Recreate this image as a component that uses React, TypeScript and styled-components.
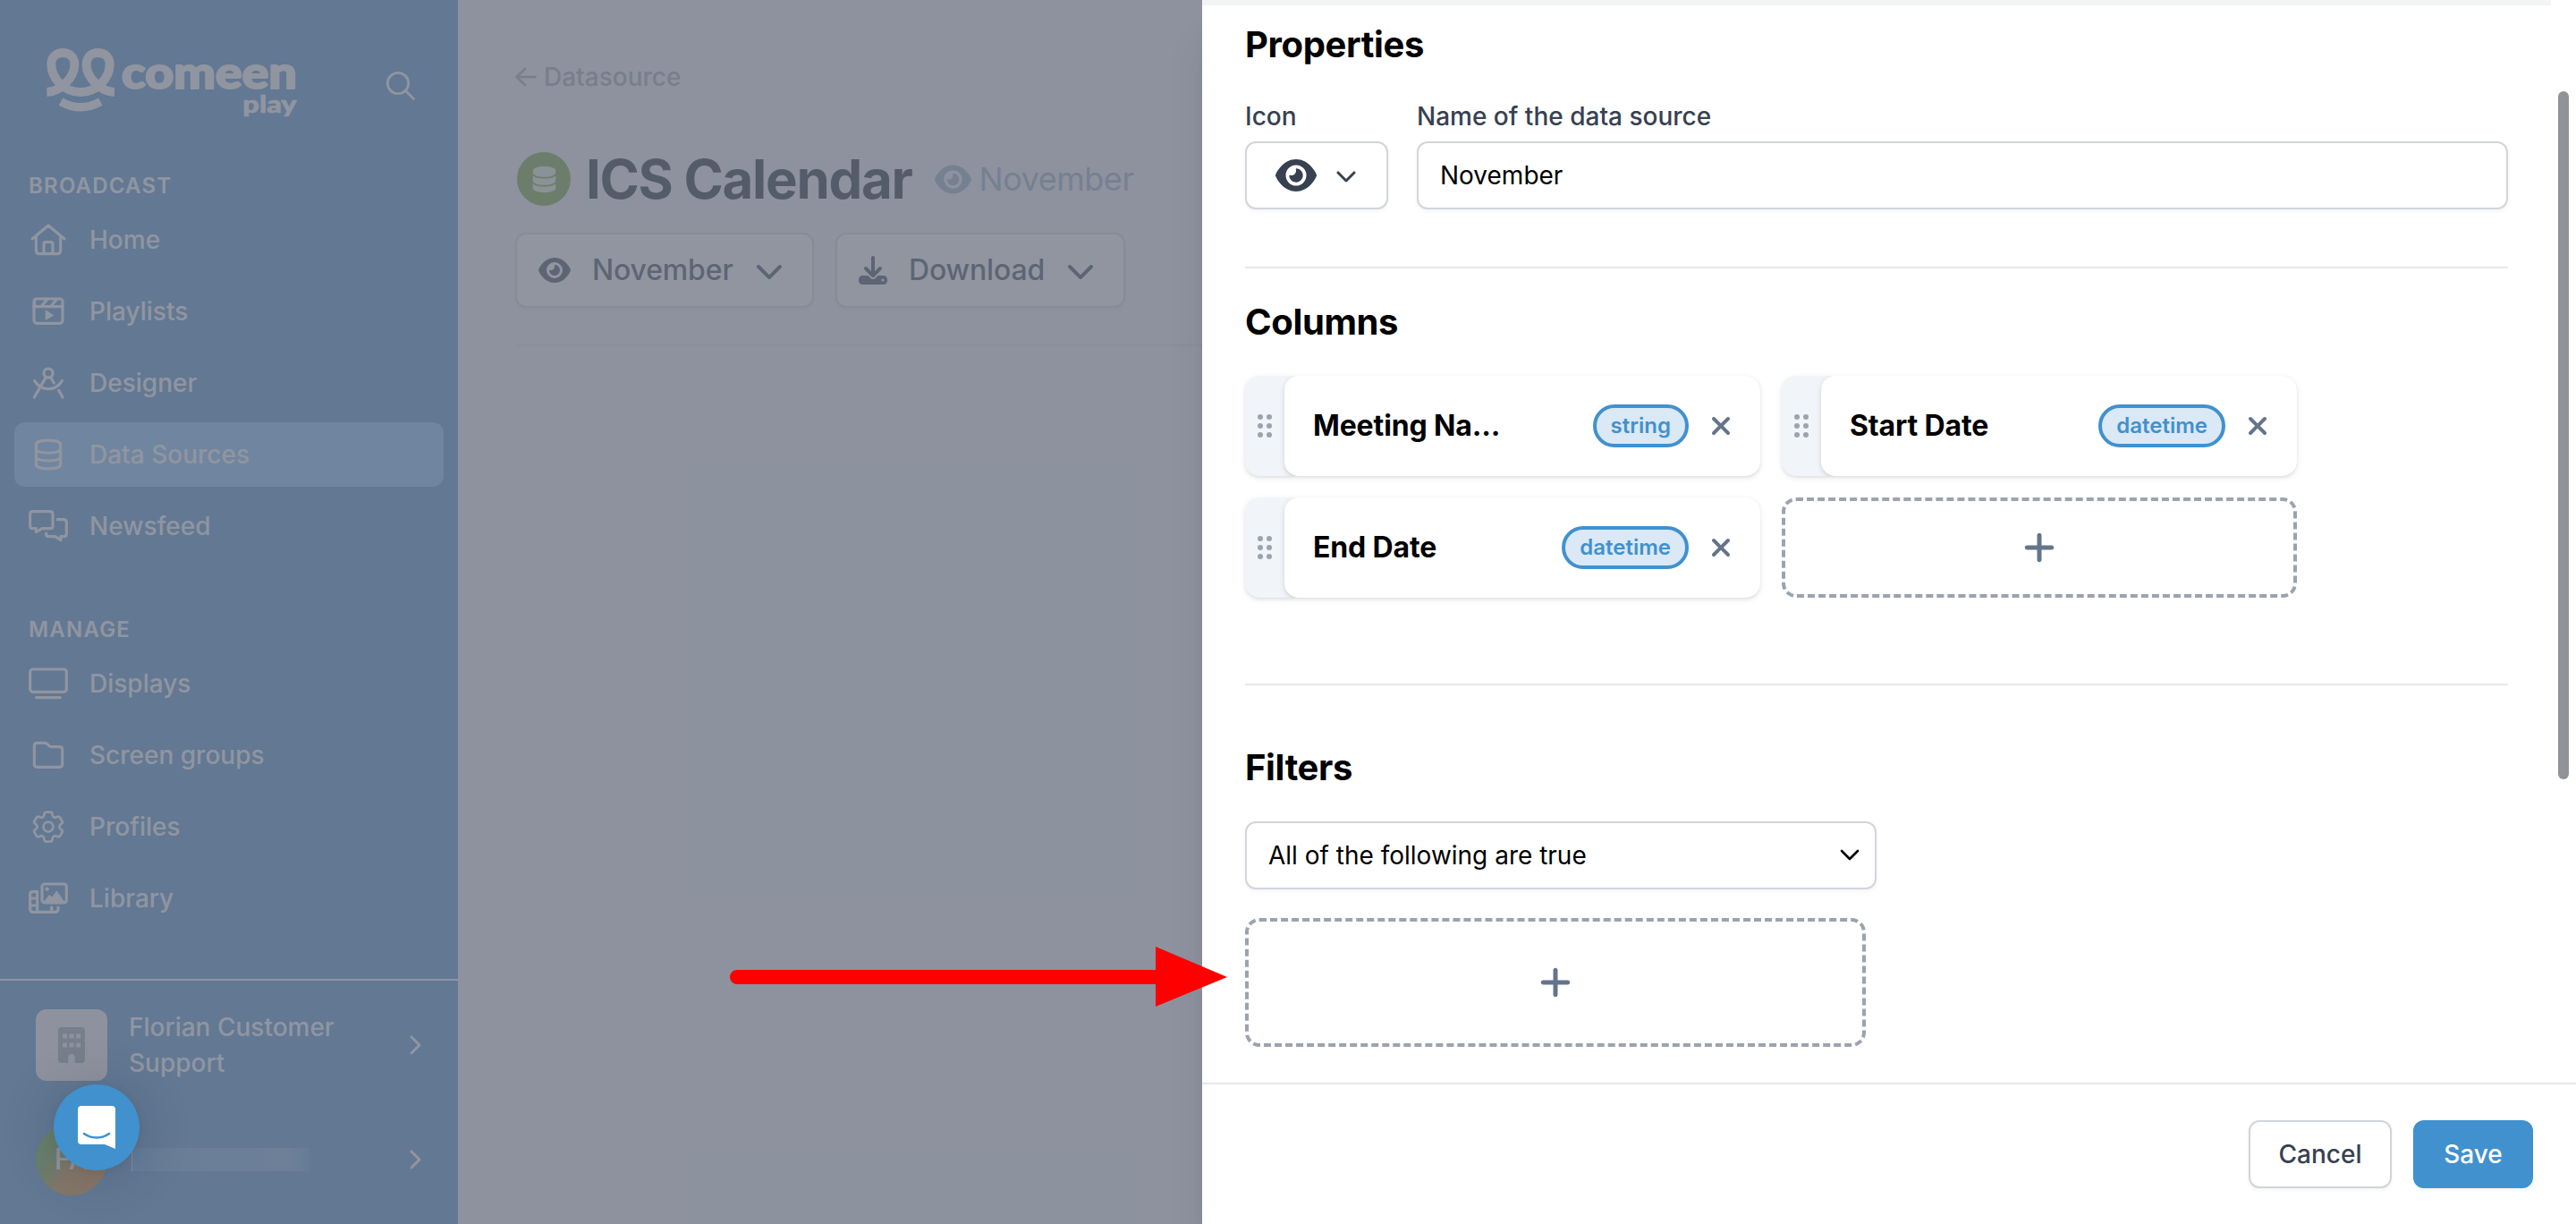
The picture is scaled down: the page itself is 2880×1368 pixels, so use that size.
import React from "react";
import styled, { createGlobalStyle } from "styled-components";
import { FaEye, FaDownload, FaChevronDown, FaChevronRight, FaBuilding, FaXmark, FaPlus, FaDatabase } from "react-icons/fa6";
import { HiOutlineCog6Tooth } from "react-icons/hi2";

const Global = createGlobalStyle`
  *, *::before, *::after { box-sizing: border-box; }
  body { margin: 0; background: #f3f4f6; overflow: hidden; }
  body, button, input { font-family: Inter, "Liberation Sans", sans-serif; }
  svg { display: block; flex: none; }
`;

const Page = styled.div`
  position: relative;
  display: flex;
  width: 2880px;
  height: 1368px;
  overflow: hidden;
  background: #f3f4f6;
`;

/* ---------- sidebar ---------- */

const Sidebar = styled.aside`
  display: flex;
  flex-direction: column;
  flex: none;
  width: 512px;
  background: #498acb;
  color: #fff;
`;

const SidebarHeader = styled.header`
  display: flex;
  justify-content: space-between;
  align-items: flex-start;
  flex: none;
  height: 192px;
  padding: 52px 46px 0 50px;
`;

const SearchButton = styled.span`
  display: flex;
  margin-top: 26px;
`;

const NavSections = styled.div`
  display: flex;
  flex-direction: column;
  gap: 64px;
  padding: 0 16px;
`;

const NavSection = styled.nav`
  display: flex;
  flex-direction: column;
  gap: 8px;
`;

const NavHeading = styled.h3`
  margin: 0;
  padding-left: 16px;
  font-size: 24px;
  line-height: 32px;
  font-weight: 600;
  letter-spacing: 0.05em;
`;

const NavItem = styled.a<{ $active?: boolean }>`
  display: flex;
  align-items: center;
  gap: 24px;
  height: 72px;
  padding: 0 16px;
  border-radius: 12px;
  background: ${(p) => (p.$active ? "#7fc0fc" : "transparent")};
  font-size: 28px;
  font-weight: 500;
`;

const IconSlot = styled.span`
  display: flex;
  align-items: center;
  justify-content: center;
  width: 44px;
  height: 44px;
`;

const SidebarFooter = styled.footer`
  display: flex;
  flex-direction: column;
  flex: none;
  gap: 48px;
  margin-top: auto;
  height: 274px;
  padding: 32px 40px;
  border-top: 2px solid #fff;
`;

const AccountRow = styled.div`
  display: flex;
  align-items: center;
  height: 80px;
  gap: 24px;
  font-size: 28px;
  line-height: 40px;
  font-weight: 500;
`;

const AccountLogo = styled.div`
  display: flex;
  align-items: center;
  justify-content: center;
  flex: none;
  width: 80px;
  height: 80px;
  border-radius: 12px;
  background: #f3f4f6;
  color: #9ca3af;
`;

const Avatar = styled.div`
  display: flex;
  align-items: center;
  justify-content: center;
  flex: none;
  width: 80px;
  height: 80px;
  border-radius: 50%;
  background: linear-gradient(125deg, #56aa34 15%, #72a034 34%, #cf862c 56%, #e48220 100%);
  font-size: 32px;
`;

const AccountName = styled.div`
  flex: 1;
  min-width: 0;
`;

const MaskedName = styled.div`
  width: 199px;
  height: 26px;
  margin-left: 3px;
  border-left: 1px solid #cfe0f2;
  background: linear-gradient(90deg, #4a9eec, #62a0da 14%, #6fa7de 50%, #76abde 88%, #599ada);
`;

const Disclosure = styled.span`
  display: flex;
  justify-content: center;
  width: 18px;
`;

/* ---------- main column ---------- */

const Main = styled.main`
  flex: 1;
  padding: 66px 64px 0;
`;

const Breadcrumb = styled.a`
  display: flex;
  align-items: center;
  gap: 8px;
  height: 40px;
  color: #9ca3af;
  font-size: 28px;
  font-weight: 500;
`;

const TitleRow = styled.div`
  display: flex;
  align-items: center;
  height: 60px;
  margin: 64px 0 30px;
  padding-left: 2px;
`;

const SourceBadge = styled.span`
  display: flex;
  align-items: center;
  justify-content: center;
  width: 60px;
  height: 60px;
  border-radius: 50%;
  background: #6fa42c;
  color: #e8f2dc;
`;

const Title = styled.h1`
  margin: 0 25px 0 17px;
  color: #111827;
  font-size: 60px;
  font-weight: 700;
  letter-spacing: -0.022em;
`;

const Subtitle = styled.span`
  display: flex;
  align-items: center;
  gap: 9px;
  color: #94aac2;
  font-size: 36px;
  letter-spacing: -0.013em;
`;

const Actions = styled.div`
  display: flex;
  gap: 24px;
  padding-bottom: 40px;
  border-bottom: 4px solid #e5e7eb;
`;

const ActionButton = styled.button<{ $width: number }>`
  display: flex;
  align-items: center;
  gap: 24px;
  width: ${(p) => p.$width}px;
  height: 84px;
  padding: 0 24px 1px;
  border: 2px solid #d1d5db;
  border-radius: 12px;
  background: #fff;
  box-shadow: 0 2px 4px rgba(0, 0, 0, 0.05);
  color: #374151;
  font-size: 32px;
  font-weight: 500;
  letter-spacing: -0.005em;
`;

/* ---------- drawer ---------- */

const Backdrop = styled.div`
  position: absolute;
  inset: 0;
  background: rgba(107, 114, 128, 0.75);
`;

const Drawer = styled.section`
  position: absolute;
  top: 0;
  right: 0;
  bottom: 0;
  display: flex;
  flex-direction: column;
  width: 1536px;
  background: #fff;
  box-shadow: 0 40px 50px -10px rgba(0, 0, 0, 0.1), 0 16px 20px -12px rgba(0, 0, 0, 0.1);
`;

const DrawerScroll = styled.div`
  display: flex;
  height: 1210px;
`;

const DrawerBody = styled.div`
  flex: 1;
  border-top: 6px solid #f3f4f6;
  padding: 16px 48px 0;
`;

const ScrollTrack = styled.div`
  width: 28px;
  padding: 102px 8px 0;
`;

const ScrollThumb = styled.div`
  width: 12px;
  height: 769px;
  border-radius: 6px;
  background: #909398;
`;

const Heading = styled.h2`
  margin: 0 0 32px;
  color: #000;
  font-size: 40px;
  line-height: 56px;
  font-weight: 700;
  letter-spacing: -0.009em;
`;

const FieldRow = styled.div`
  display: flex;
  gap: 32px;
`;

const Field = styled.div<{ $width?: number }>`
  display: flex;
  flex-direction: column;
  gap: 8px;
  ${(p) => (p.$width ? `width: ${p.$width}px;` : "flex: 1;")}
`;

const Label = styled.label`
  color: #374151;
  font-size: 28px;
  line-height: 40px;
  font-weight: 500;
`;

const Control = styled.div<{ $width?: number; $center?: boolean }>`
  display: flex;
  align-items: center;
  justify-content: ${(p) => (p.$center ? "center" : "space-between")};
  gap: 21px;
  width: ${(p) => (p.$width ? `${p.$width}px` : "100%")};
  height: 76px;
  padding: 0 17px 0 ${(p) => (p.$center ? 16 : 24)}px;
  border: 2px solid #d1d5db;
  border-radius: 12px;
  background: #fff;
  box-shadow: 0 2px 4px rgba(0, 0, 0, 0.05);
  color: ${(p) => (p.$center ? "#374151" : "#000")};
  font-size: 28px;
`;

const Divider = styled.hr<{ $before: number; $after: number }>`
  height: 2px;
  margin: ${(p) => p.$before}px 0 ${(p) => p.$after}px;
  border: 0;
  background: #e5e7eb;
`;

const ColumnGrid = styled.div`
  display: grid;
  grid-template-columns: 576px 576px;
  grid-auto-rows: 112px;
  gap: 24px;
`;

const ColumnCard = styled.article`
  display: flex;
  overflow: hidden;
  border-radius: 16px;
  background: #f1f5f9;
  box-shadow: 0 2px 6px rgba(0, 0, 0, 0.1), 0 2px 4px -2px rgba(0, 0, 0, 0.1);
`;

const Grip = styled.div`
  display: grid;
  grid-template-columns: 6px 6px;
  gap: 4px;
  place-content: center;
  width: 44px;
`;

const GripDot = styled.i`
  width: 6px;
  height: 6px;
  border-radius: 50%;
  background: #9ca3af;
`;

const ColumnBody = styled.div`
  display: flex;
  align-items: center;
  flex: 1;
  min-width: 0;
  padding: 0 28px 0 32px;
  border-radius: 16px;
  background: #fff;
  box-shadow: 0 2px 6px rgba(0, 0, 0, 0.12), 0 2px 4px -2px rgba(0, 0, 0, 0.1);
  color: #64748b;
`;

const ColumnName = styled.strong`
  flex: 1;
  padding-bottom: 1px;
  color: #000;
  font-size: 32px;
  font-weight: 700;
  letter-spacing: -0.004em;
`;

const TypeTag = styled.span`
  display: flex;
  align-items: center;
  height: 48px;
  margin-right: 20px;
  padding: 0 16px 1px;
  border: 4px solid #4091ce;
  border-radius: 24px;
  background: #dbe8f6;
  color: #4091ce;
  font-size: 24px;
  font-weight: 600;
`;

const AddBox = styled.button<{ $width: number; $height: number; $top?: number }>`
  display: flex;
  align-items: center;
  justify-content: center;
  width: ${(p) => p.$width}px;
  height: ${(p) => p.$height}px;
  margin: ${(p) => p.$top ?? 0}px 0 0;
  padding: 0;
  border: 4px dashed #9ca3af;
  border-radius: 16px;
  background: #fff;
  color: #64748b;
`;

const DrawerFooter = styled.footer`
  display: flex;
  justify-content: flex-end;
  gap: 24px;
  flex: 1;
  padding: 40px 48px;
  border-top: 2px solid #e5e7eb;
`;

const FooterButton = styled.button<{ $primary?: boolean }>`
  width: ${(p) => (p.$primary ? 134 : 160)}px;
  height: 76px;
  padding: 0;
  border: 2px solid ${(p) => (p.$primary ? "#4091ce" : "#d1d5db")};
  border-radius: 12px;
  background: ${(p) => (p.$primary ? "#4091ce" : "#fff")};
  box-shadow: 0 2px 4px rgba(0, 0, 0, 0.05);
  color: ${(p) => (p.$primary ? "#fff" : "#374151")};
  font-size: 28px;
  font-weight: 500;
`;

/* ---------- floating pieces ---------- */

const ChatLauncher = styled.div`
  position: absolute;
  left: 60px;
  top: 1212px;
  display: flex;
  align-items: center;
  justify-content: center;
  width: 96px;
  height: 96px;
  border-radius: 50%;
  background: #4091ce;
  box-shadow: 0 2px 12px rgba(0, 0, 0, 0.06), 0 4px 64px rgba(0, 0, 0, 0.16);
`;

const Pointer = styled.svg`
  position: absolute;
  left: 816px;
  top: 1057px;
`;

const Glyph = ({ children }: { children: React.ReactNode }) => (
  <svg width="44" height="36" viewBox="0 0 132 108" fill="none" stroke="currentColor" strokeWidth="9.5" strokeLinecap="round" strokeLinejoin="round">
    {children}
  </svg>
);

const HomeIcon = () => (
  <Glyph>
    <path d="M12 51 66 6l54 45M25 42v48q0 11 11 11h60q11 0 11-11V42M51 101V68q0-6 6-6h18q6 0 6 6v33" />
  </Glyph>
);

const PlaylistIcon = () => (
  <Glyph>
    <rect x="18" y="12" width="96" height="82" rx="9" />
    <path d="M18 38h96M20 14v20M43 37 63 13M75 37 95 13" />
    <path d="M58 52v29l23-14z" fill="currentColor" strokeWidth="4" />
  </Glyph>
);

const DesignerIcon = () => (
  <Glyph>
    <circle cx="66" cy="21" r="15" />
    <path d="M58 35 19 102M74 35l11 19M101 79l13 23M20 47c10 17 27 27 46 27s36-10 46-27" />
  </Glyph>
);

const DataIcon = () => (
  <Glyph>
    <path d="M25 20c0-18 82-18 82 0v68c0 18-82 18-82 0zM25 38c10 14 72 14 82 0M25 64c10 14 72 14 82 0" />
  </Glyph>
);

const NewsIcon = () => (
  <Glyph>
    <path d="M14 5h58q9 0 9 9v39q0 9-9 9H45L25 74V62H14q-9 0-9-9V14q0-9 9-9z" />
    <path strokeLinecap="butt" d="M93 32h25q9 0 9 9v39q0 9-9 9h-10v12L89 89H68q-9 0-9-9v-6" />
  </Glyph>
);

const DisplayIcon = () => (
  <Glyph>
    <rect x="5" y="6" width="122" height="76" rx="9" />
    <path d="M26 101h80" />
  </Glyph>
);

const FolderIcon = () => (
  <Glyph>
    <path d="M19 22q0-9 9-9h26q5 0 8 3l7 7q3 3 8 3h27q9 0 9 9v50q0 9-9 9H28q-9 0-9-9z" />
  </Glyph>
);

const LibraryIcon = () => (
  <Glyph>
    <rect x="45" y="6" width="82" height="63" rx="9" />
    <circle cx="62" cy="23" r="6.5" fill="currentColor" stroke="none" />
    <path d="M52 65 70 43l8 9 16-22 25 36z" fill="currentColor" strokeWidth="3" />
    <path strokeLinecap="butt" d="M33 32H14q-9 0-9 9v50q0 9 9 9h76q9 0 9-9V80M29 32v68M5 54h24M5 78h24M77 80v20" />
  </Glyph>
);

const Logo = () => (
  <svg width="284" height="84" viewBox="150 156 852 252" fill="none" stroke="#fff">
    <path
      strokeWidth="30"
      d="M157 309C200 308 250 262 250 216C250 192 234 177 211 177S172 192 172 216C172 262 215 309 270 309S368 262 368 216C368 192 352 177 329 177S290 192 290 216C290 262 340 308 384 309"
    />
    <path strokeWidth="28" d="M204 341Q270 378 337 341" />
    <g fill="#fff" strokeLinejoin="round" fontFamily='Lato, "Liberation Sans", sans-serif' fontWeight="900">
      <text x="408" y="297" fontSize="146" strokeWidth="6" textLength="588" lengthAdjust="spacingAndGlyphs">comeen</text>
      <text x="814" y="377" fontSize="82" strokeWidth="2" textLength="181" lengthAdjust="spacingAndGlyphs">play</text>
    </g>
  </svg>
);

type Item = { label: string; icon: React.ReactNode; active?: boolean };

const broadcast: Item[] = [
  { label: "Home", icon: <HomeIcon /> },
  { label: "Playlists", icon: <PlaylistIcon /> },
  { label: "Designer", icon: <DesignerIcon /> },
  { label: "Data Sources", icon: <DataIcon />, active: true },
  { label: "Newsfeed", icon: <NewsIcon /> },
];

const manage: Item[] = [
  { label: "Displays", icon: <DisplayIcon /> },
  { label: "Screen groups", icon: <FolderIcon /> },
  { label: "Profiles", icon: <HiOutlineCog6Tooth size={44} /> },
  { label: "Library", icon: <LibraryIcon /> },
];

const columns = [
  { name: "Meeting Na...", type: "string" },
  { name: "Start Date", type: "datetime" },
  { name: "End Date", type: "datetime" },
];

const Nav = ({ title, items }: { title: string; items: Item[] }) => (
  <NavSection>
    <NavHeading>{title}</NavHeading>
    {items.map((item) => (
      <NavItem key={item.label} $active={item.active}>
        <IconSlot>{item.icon}</IconSlot>
        {item.label}
      </NavItem>
    ))}
  </NavSection>
);

export default function App() {
  return (
    <Page>
      <Global />
      <Sidebar>
        <SidebarHeader>
          <Logo />
          <SearchButton>
            <svg width="36" height="36" viewBox="0 0 36 36" fill="none" stroke="#fff" strokeWidth="2.8" strokeLinecap="round">
              <circle cx="15" cy="15" r="11.7" />
              <path d="M23.5 23.5 32.5 32.5" />
            </svg>
          </SearchButton>
        </SidebarHeader>
        <NavSections>
          <Nav title="BROADCAST" items={broadcast} />
          <Nav title="MANAGE" items={manage} />
        </NavSections>
        <SidebarFooter>
          <AccountRow>
            <AccountLogo>
              <FaBuilding size={40} />
            </AccountLogo>
            <AccountName>
              Florian Customer
              <br />
              Support
            </AccountName>
            <Disclosure>
              <FaChevronRight size={24} />
            </Disclosure>
          </AccountRow>
          <AccountRow>
            <Avatar>FA</Avatar>
            <AccountName>
              <MaskedName />
            </AccountName>
            <Disclosure>
              <FaChevronRight size={24} />
            </Disclosure>
          </AccountRow>
        </SidebarFooter>
      </Sidebar>

      <Main>
        <Breadcrumb>
          <svg width="24" height="24" viewBox="0 0 24 24" fill="none" stroke="currentColor" strokeWidth="2.6" strokeLinecap="round" strokeLinejoin="round">
            <path d="M11 3 1.5 12l9.5 9M2 12h20.5" />
          </svg>
          Datasource
        </Breadcrumb>
        <TitleRow>
          <SourceBadge>
            <FaDatabase size={29} />
          </SourceBadge>
          <Title>ICS Calendar</Title>
          <Subtitle>
            <FaEye size={41} />
            November
          </Subtitle>
        </TitleRow>
        <Actions>
          <ActionButton $width={334}>
            <FaEye size={36} />
            November
            <FaChevronDown size={32} />
          </ActionButton>
          <ActionButton $width={324}>
            <FaDownload size={32} />
            Download
            <FaChevronDown size={32} />
          </ActionButton>
        </Actions>
      </Main>

      <Backdrop />

      <Drawer>
        <DrawerScroll>
          <DrawerBody>
            <Heading>Properties</Heading>
            <FieldRow>
              <Field $width={160}>
                <Label>Icon</Label>
                <Control $center>
                  <FaEye size={46} />
                  <FaChevronDown size={24} />
                </Control>
              </Field>
              <Field>
                <Label>Name of the data source</Label>
                <Control>November</Control>
              </Field>
            </FieldRow>
            <Divider $before={64} $after={32} />

            <Heading>Columns</Heading>
            <ColumnGrid>
              {columns.map((column) => (
                <ColumnCard key={column.name}>
                  <Grip>
                    {[0, 1, 2, 3, 4, 5].map((dot) => (
                      <GripDot key={dot} />
                    ))}
                  </Grip>
                  <ColumnBody>
                    <ColumnName>{column.name}</ColumnName>
                    <TypeTag>{column.type}</TypeTag>
                    <FaXmark size={32} />
                  </ColumnBody>
                </ColumnCard>
              ))}
              <AddBox $width={576} $height={112}>
                <FaPlus size={40} />
              </AddBox>
            </ColumnGrid>
            <Divider $before={96} $after={64} />

            <Heading>Filters</Heading>
            <Control $width={706}>
              All of the following are true
              <svg width="22" height="14" viewBox="0 0 22 14" fill="none" stroke="#000" strokeWidth="2.6" strokeLinecap="round" strokeLinejoin="round">
                <path d="m2 2 9 9 9-9" />
              </svg>
            </Control>
            <AddBox $width={694} $height={144} $top={32}>
              <FaPlus size={40} />
            </AddBox>
          </DrawerBody>
          <ScrollTrack>
            <ScrollThumb />
          </ScrollTrack>
        </DrawerScroll>
        <DrawerFooter>
          <FooterButton>Cancel</FooterButton>
          <FooterButton $primary>Save</FooterButton>
        </DrawerFooter>
      </Drawer>

      <ChatLauncher>
        <svg width="42" height="48" viewBox="0 0 42 48">
          <path fill="#fff" d="M4 0h34a4 4 0 0 1 4 4v44l-12-5H4a4 4 0 0 1-4-4V4a4 4 0 0 1 4-4z" />
          <path fill="none" stroke="#4091ce" strokeWidth="2.6" strokeLinecap="round" d="M7 31c8 6 20 6 28 0" />
        </svg>
      </ChatLauncher>

      <Pointer width="556" height="69" viewBox="0 0 556 69" fill="#f00">
        <path d="M8 27h468V1l80 34-80 33V43H8a8 8 0 0 1 0-16z" />
      </Pointer>
    </Page>
  );
}
